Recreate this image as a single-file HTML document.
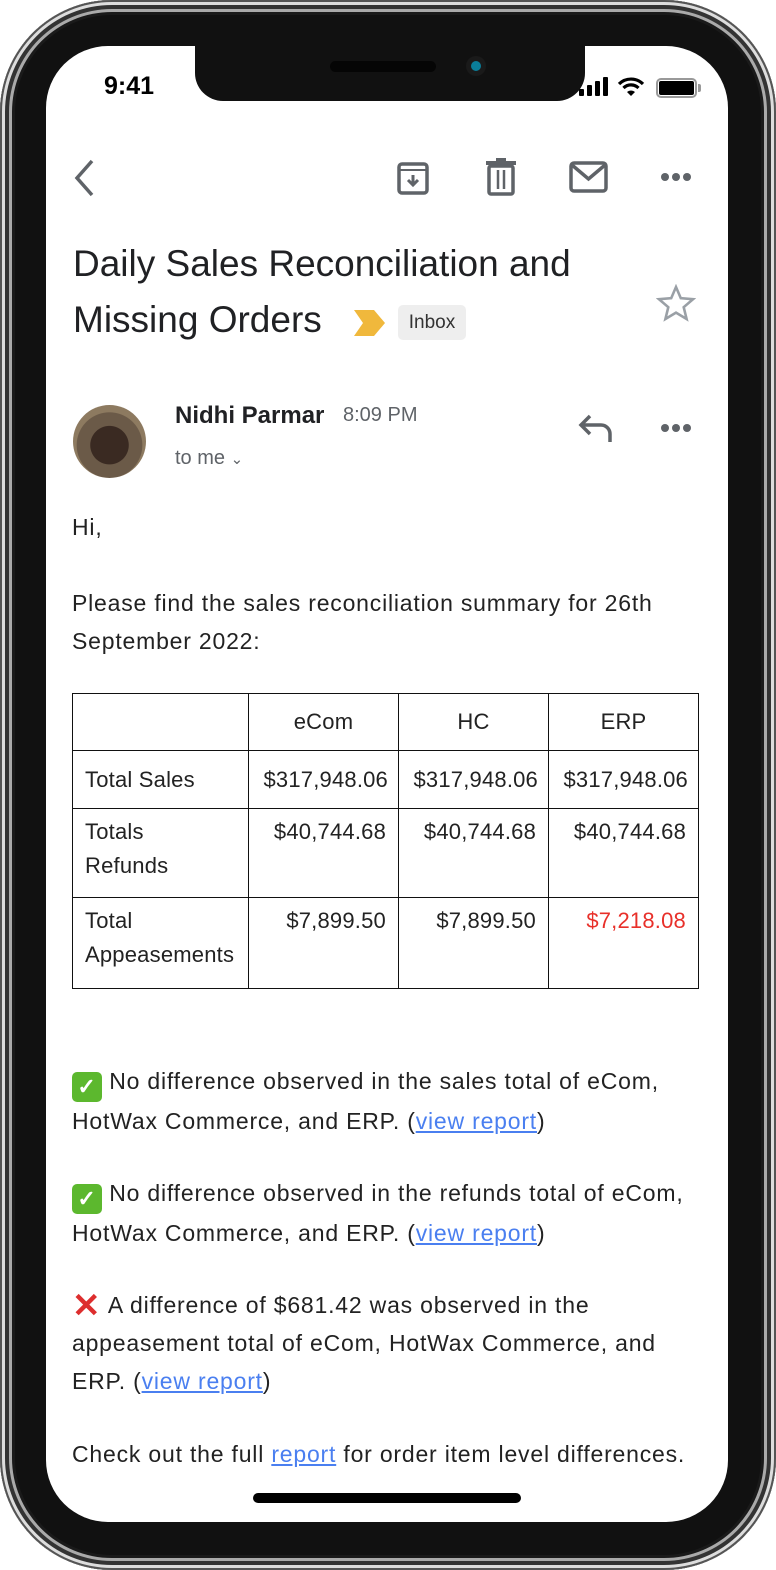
<!DOCTYPE html>
<html><head><meta charset="utf-8"><style>
*{margin:0;padding:0;box-sizing:border-box}
body{width:776px;height:1570px;background:#fff;position:relative;overflow:hidden;font-family:"Liberation Sans",Arial,sans-serif}
.frame{position:absolute;left:0;top:0;width:776px;height:1570px;border-radius:112px;background:#111;box-shadow:inset 0 0 0 2px #555,inset 0 0 0 5px #ddd,inset 0 0 0 9px #333,inset 0 0 0 12px #aaa,inset 0 0 0 15px #1a1a1a}
.screen{position:absolute;left:46px;top:46px;width:682px;height:1476px;background:#fff;border-radius:62px;overflow:hidden}
.notch{position:absolute;left:195px;top:46px;width:390px;height:55px;background:#111;border-radius:0 0 28px 28px}
.abs{position:absolute}
.t{color:#222;font-size:23px;letter-spacing:0.8px;line-height:38px}
a{color:#4a7ff0;text-decoration:underline}
table{position:absolute;left:72px;top:693px;width:627px;border-collapse:collapse;font-size:22px;letter-spacing:0.2px;color:#222}
td{border:1.5px solid #111;padding:6px 12px;vertical-align:top;line-height:34px;white-space:nowrap}
</style></head><body>
<div class="frame"></div>
<div class="screen"></div>
<div class="notch"></div>
<div class="abs" style="left:330px;top:61px;width:106px;height:11px;border-radius:6px;background:#050505"></div>
<div class="abs" style="left:466px;top:56px;width:20px;height:20px;border-radius:50%;background:#1a1a1a"></div>
<div class="abs" style="left:471px;top:61px;width:10px;height:10px;border-radius:50%;background:#0a7e9a"></div>
<div class="abs" style="left:104px;top:72px;font-size:25px;font-weight:bold;color:#000">9:41</div>
<div class="abs" style="left:579px;top:89px;width:5px;height:7px;background:#000;border-radius:1px"></div>
<div class="abs" style="left:587px;top:85px;width:5px;height:11px;background:#000;border-radius:1px"></div>
<div class="abs" style="left:595px;top:81px;width:5px;height:15px;background:#000;border-radius:1px"></div>
<div class="abs" style="left:603px;top:77px;width:5px;height:19px;background:#000;border-radius:1px"></div>
<svg class="abs" style="left:617px;top:77px" width="28" height="20" viewBox="0 0 28 20"><path d="M2 7a17 17 0 0 1 24 0" stroke="#000" stroke-width="3.2" fill="none"/><path d="M6.5 11a10.5 10.5 0 0 1 15 0" stroke="#000" stroke-width="3.2" fill="none"/><path d="M10 15l4 4 4-4a6 6 0 0 0-8 0z" fill="#000"/></svg>
<div class="abs" style="left:656px;top:78px;width:41px;height:20px;border:2px solid #999;border-radius:5px"></div>
<div class="abs" style="left:659px;top:81px;width:35px;height:14px;background:#000;border-radius:2px"></div>
<div class="abs" style="left:698px;top:84px;width:3px;height:8px;background:#999;border-radius:0 2px 2px 0"></div>
<svg class="abs" style="left:70px;top:158px" width="30" height="40"><path d="M22 3L7 20l15 17" stroke="#5f6368" stroke-width="3.5" fill="none"/></svg>
<svg class="abs" style="left:396px;top:160px" width="36" height="36" viewBox="0 0 36 36"><rect x="3" y="4" width="28" height="29" rx="3" stroke="#5f6368" stroke-width="3.5" fill="none"/><line x1="3" y1="10" x2="31" y2="10" stroke="#5f6368" stroke-width="2"/><path d="M17 15v10M12 20l5 5 5-5" stroke="#5f6368" stroke-width="3" fill="none"/></svg>
<svg class="abs" style="left:484px;top:158px" width="34" height="38" viewBox="0 0 34 38"><rect x="2" y="3" width="30" height="4" fill="#5f6368"/><rect x="12" y="0" width="10" height="4" fill="#5f6368"/><rect x="5" y="8" width="24" height="28" rx="2" stroke="#5f6368" stroke-width="3.5" fill="none"/><line x1="14" y1="12" x2="14" y2="31" stroke="#5f6368" stroke-width="2.5"/><line x1="20" y1="12" x2="20" y2="31" stroke="#5f6368" stroke-width="2.5"/></svg>
<svg class="abs" style="left:569px;top:161px" width="40" height="32" viewBox="0 0 40 32"><rect x="2" y="2" width="35" height="28" rx="3" stroke="#5f6368" stroke-width="3.5" fill="none"/><path d="M3 4l16.5 14L36 4" stroke="#5f6368" stroke-width="3.5" fill="none"/></svg>
<svg class="abs" style="left:660px;top:171px" width="32" height="12"><circle cx="5" cy="6" r="4" fill="#5f6368"/><circle cx="16" cy="6" r="4" fill="#5f6368"/><circle cx="27" cy="6" r="4" fill="#5f6368"/></svg>
<div class="abs" style="left:73px;top:236px;font-size:37px;line-height:56px;color:#202124">Daily Sales Reconciliation and<br>Missing Orders</div>
<svg class="abs" style="left:354px;top:309px" width="32" height="28"><path d="M0 1h20l11 13-11 13H0l9-13z" fill="#f0b83c"/></svg>
<div class="abs" style="left:398px;top:305px;width:68px;height:35px;background:#eee;border-radius:5px;font-size:19px;line-height:35px;text-align:center;color:#333">Inbox</div>
<svg class="abs" style="left:656px;top:284px" width="40" height="38" viewBox="0 0 40 38"><path d="M20 3l4.8 11.2 12.2 1-9.3 8 2.9 11.8L20 28.6 9.4 35l2.9-11.8-9.3-8 12.2-1z" stroke="#9aa0a6" stroke-width="2.6" fill="none"/></svg>
<div class="abs" style="left:73px;top:405px;width:73px;height:73px;border-radius:50%;background:radial-gradient(circle at 50% 55%,#3a2a22 0 35%,#6b5a48 36% 60%,#8d7a60 61%)"></div>
<div class="abs" style="left:175px;top:402px;font-size:24px;font-weight:bold;color:#202124">Nidhi Parmar</div>
<div class="abs" style="left:343px;top:404px;font-size:20px;color:#5f6368">8:09 PM</div>
<div class="abs" style="left:175px;top:447px;font-size:20px;color:#5f6368">to me <span style="font-size:15px">&#8964;</span></div>
<svg class="abs" style="left:578px;top:412px" width="36" height="32" viewBox="0 0 36 32"><path d="M12 4L3 13l9 9M3 13h20a9 9 0 0 1 9 9v8" stroke="#5f6368" stroke-width="3.5" fill="none"/></svg>
<svg class="abs" style="left:660px;top:422px" width="32" height="12"><circle cx="5" cy="6" r="4" fill="#5f6368"/><circle cx="16" cy="6" r="4" fill="#5f6368"/><circle cx="27" cy="6" r="4" fill="#5f6368"/></svg>
<div class="abs t" style="left:72px;top:508px">Hi,</div>
<div class="abs t" style="left:72px;top:584px;width:620px">Please find the sales reconciliation summary for 26th September 2022:</div>
<table>
<tr style="height:57px"><td style="width:176px"></td><td style="width:150px;text-align:center;vertical-align:middle">eCom</td><td style="width:150px;text-align:center;vertical-align:middle">HC</td><td style="text-align:center;vertical-align:middle">ERP</td></tr>
<tr style="height:58px"><td style="vertical-align:middle">Total Sales</td><td style="text-align:right;padding:6px 10px;vertical-align:middle">$317,948.06</td><td style="text-align:right;padding:6px 10px;vertical-align:middle">$317,948.06</td><td style="text-align:right;padding:6px 10px;vertical-align:middle">$317,948.06</td></tr>
<tr style="height:89px"><td>Totals<br>Refunds</td><td style="text-align:right">$40,744.68</td><td style="text-align:right">$40,744.68</td><td style="text-align:right">$40,744.68</td></tr>
<tr style="height:91px"><td>Total<br>Appeasements</td><td style="text-align:right">$7,899.50</td><td style="text-align:right">$7,899.50</td><td style="text-align:right;color:#e8302a">$7,218.08</td></tr>
</table>
<div class="abs t" style="left:72px;top:1062px;width:632px"><span style="display:inline-block;width:30px;height:30px;background:#5cb82e;border-radius:5px;color:#fff;text-align:center;line-height:30px;font-size:22px;vertical-align:-5px;font-weight:bold">✓</span> No difference observed in the sales total of eCom, HotWax Commerce, and ERP. (<a>view report</a>)</div>
<div class="abs t" style="left:72px;top:1174px;width:632px"><span style="display:inline-block;width:30px;height:30px;background:#5cb82e;border-radius:5px;color:#fff;text-align:center;line-height:30px;font-size:22px;vertical-align:-5px;font-weight:bold">✓</span> No difference observed in the refunds total of eCom, HotWax Commerce, and ERP. (<a>view report</a>)</div>
<div class="abs t" style="left:72px;top:1286px;width:632px"><span style="display:inline-block;width:30px;color:#dd2e2e;font-size:34px;font-weight:bold;vertical-align:-4px;line-height:30px">✕</span> A difference of $681.42 was observed in the appeasement total of eCom, HotWax Commerce, and ERP. (<a>view report</a>)</div>
<div class="abs t" style="left:72px;top:1435px;width:660px;white-space:nowrap">Check out the full <a>report</a> for order item level differences.</div>
<div class="abs" style="left:253px;top:1493px;width:268px;height:10px;border-radius:5px;background:#000"></div>
</body></html>
